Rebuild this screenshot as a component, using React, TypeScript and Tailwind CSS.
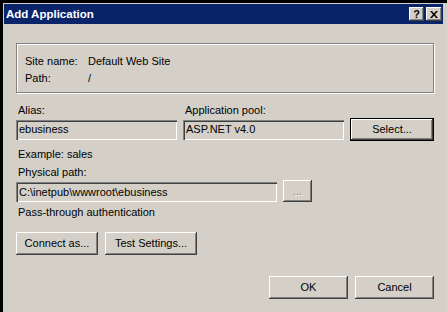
import React from "react"

const raised =
  "shadow-[inset_-1px_-1px_0_#404040,inset_1px_1px_0_#ffffff,inset_-2px_-2px_0_#808080,inset_2px_2px_0_#d4d0c8]"
const sunken =
  "shadow-[inset_1px_1px_0_#808080,inset_2px_2px_0_#404040,inset_-1px_-1px_0_#ffffff,inset_-2px_-2px_0_#d4d0c8]"

const Button = ({ label, className = "" }: { label: string; className?: string }) => (
  <div className={`h-[23px] flex items-center justify-center bg-[#d4d0c8] text-black ${raised} ${className}`}>
    {label}
  </div>
)

const TextBox = ({ value, className = "" }: { value: string; className?: string }) => (
  <div className={`h-[20px] flex items-center pl-[3px] bg-[#d4d0c8] text-black ${sunken} ${className}`}>{value}</div>
)

export default function App() {
  return (
    <div className="w-[447px] h-[312px] overflow-hidden bg-black pt-[3px] pl-[3px] font-['Liberation_Sans',Tahoma,sans-serif] text-[11px] leading-[13px]">
      <div className="h-full bg-[#d4d0c8] pt-[1px] pl-[1px]">
        {/* title bar */}
        <div className="w-[439px] h-[20px] bg-[#0a246a] flex items-center justify-between pl-[2px] pr-[1px]">
          <span className="text-white font-bold text-[11.5px]">Add Application</span>
          <div className="flex gap-[2px]">
            <div className={`w-[15px] h-[14px] bg-[#d4d0c8] flex items-center justify-center font-bold text-[11px] text-black ${raised}`}>
              ?
            </div>
            <div className={`w-[16px] h-[14px] bg-[#d4d0c8] flex items-center justify-center ${raised}`}>
              <svg width="8" height="7" viewBox="0 0 8 7">
                <path d="M0 0h2l2 2.5L6 0h2L5 3.5 8 7H6L4 4.5 2 7H0l3-3.5z" fill="#000" />
              </svg>
            </div>
          </div>
        </div>

        {/* body */}
        <div className="pl-[12px] w-[430px]">
          <div className="mt-[19px] h-[50px] border border-[#808080] shadow-[inset_1px_1px_0_#ffffff,1px_1px_0_#ffffff] pt-[11px] pl-[8px]">
            <div className="flex">
              <span className="w-[63px]">Site name:</span>
              <span>Default Web Site</span>
            </div>
            <div className="flex mt-[4px]">
              <span className="w-[63px]">Path:</span>
              <span>/</span>
            </div>
          </div>

          <div className="flex mt-[11px]">
            <span className="w-[166px] pl-[2px]">Alias:</span>
            <span className="pl-[3px]">Application pool:</span>
          </div>
          <div className="flex items-center gap-[6px] mt-[1px]">
            <TextBox value="ebusiness" className="w-[161px]" />
            <TextBox value="ASP.NET v4.0" className="w-[161px]" />
            <Button label="Select..." className="w-[84px] border border-black" />
          </div>

          <div className="mt-[7px] pl-[2px]">Example: sales</div>
          <div className="mt-[5px] pl-[2px]">Physical path:</div>
          <div className="flex items-end gap-[6px] mt-[1px]">
            <TextBox value="C:\inetpub\wwwroot\ebusiness" className="w-[261px]" />
            <div className={`w-[29px] h-[22px] flex items-center justify-center bg-[#d4d0c8] text-[#808080] [text-shadow:1px_1px_0_#ffffff] ${raised}`}>
              ...
            </div>
          </div>
          <div className="mt-[4px] pl-[2px]">Pass-through authentication</div>

          <div className="flex gap-[7px] mt-[13px]">
            <Button label="Connect as..." className="w-[82px]" />
            <Button label="Test Settings..." className="w-[92px]" />
          </div>

          <div className="flex justify-end gap-[7px] mt-[21px] w-[418px]">
            <Button label="OK" className="w-[79px]" />
            <Button label="Cancel" className="w-[79px]" />
          </div>
        </div>
      </div>
    </div>
  )
}
